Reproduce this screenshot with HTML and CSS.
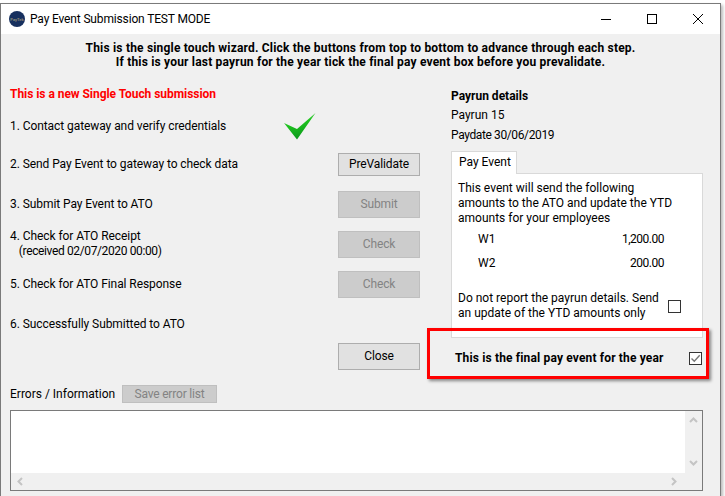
FILE: index.html
```html
<!DOCTYPE html>
<html lang="en">
<head>
<meta charset="utf-8">
<title>Pay Event Submission TEST MODE</title>
<link rel="stylesheet" href="styles.css">
</head>
<body>
<div class="window">
  <header class="titlebar">
    <svg class="app-icon" width="16" height="16" viewBox="0 0 16 16"><circle cx="8" cy="8" r="8" fill="#17305f"/><text x="8" y="9.500" text-anchor="middle" class="icon-text">PayTek</text></svg>
    <span class="title">Pay Event Submission TEST MODE</span>
    <div class="controls">
      <svg width="12" height="12" viewBox="0 0 12 12"><path d="M1 6.500H11" stroke="#000" fill="none"/></svg>
      <svg width="12" height="12" viewBox="0 0 12 12"><rect x="1.500" y="1.500" width="9" height="9" stroke="#000" fill="none"/></svg>
      <svg width="12" height="12" viewBox="0 0 12 12"><path d="M1 1L11 11M11 1L1 11" stroke="#000" fill="none"/></svg>
    </div>
  </header>
  <div class="client">
    <div class="intro">
      <div>This is the single touch wizard. Click the buttons from top to bottom to advance through each step.</div>
      <div>If this is your last payrun for the year tick the final pay event box before you prevalidate.</div>
    </div>
    <div class="main">
      <section class="steps">
        <div class="notice">This is a new Single Touch submission</div>
        <div class="step step-first">
          <span class="step-label">1. Contact gateway and verify credentials</span>
          <svg class="tick" width="32" height="28" viewBox="0 0 32 28"><defs><linearGradient id="tickfill" x1="0" y1="0" x2="0.3" y2="1"><stop offset="0" stop-color="#7bd87b"/><stop offset="0.45" stop-color="#1fc41f"/><stop offset="1" stop-color="#0c9a1c"/></linearGradient></defs><path d="M0 10L13 26.500L31.500 0L13 16Z" fill="url(#tickfill)"/></svg>
        </div>
        <div class="step"><span class="step-label">2. Send Pay Event to gateway to check data</span><button class="btn btn-short">PreValidate</button></div>
        <div class="step"><span class="step-label">3. Submit Pay Event to ATO</span><button class="btn btn-off">Submit</button></div>
        <div class="step"><span class="step-label">4. Check for ATO Receipt<br><span class="date-line">&nbsp;&nbsp;&nbsp;(received 02/07/2020 00:00)</span></span><button class="btn btn-off">Check</button></div>
        <div class="step"><span class="step-label">5. Check for ATO Final Response</span><button class="btn btn-off">Check</button></div>
        <div class="step"><span class="step-label">6. Successfully Submitted to ATO</span></div>
        <div class="close-row"><button class="btn">Close</button></div>
      </section>
      <aside class="details">
        <div class="details-head">Payrun details</div>
        <div class="details-line">Payrun 15</div>
        <div class="details-line details-date">Paydate 30/06/2019</div>
        <div class="tab">Pay Event</div>
        <div class="panel">
          <p class="panel-text">This event will send the following amounts to the ATO and update the YTD amounts for your employees</p>
          <div class="amount amount-first"><span>W1</span><span class="figure">1,200.00</span></div>
          <div class="amount"><span>W2</span><span class="figure">200.00</span></div>
          <div class="option"><span>Do not report the payrun details. Send an update of the YTD amounts only</span><i class="box"></i></div>
        </div>
        <div class="final">
          <span>This is the final pay event for the year</span>
          <i class="box box-checked"><svg width="11" height="11" viewBox="0 0 11 11"><path d="M1.500 5.500L4.300 8.300L9.700 2.300" fill="none" stroke="#777" stroke-width="1.400"/></svg></i>
        </div>
        <div class="highlight"></div>
      </aside>
    </div>
    <div class="errors-head"><span class="errors-label">Errors / Information</span><button class="btn-save">Save error list</button></div>
    <div class="listbox">
      <div class="list-top">
        <div class="list-body"></div>
        <div class="vscroll">
          <svg width="9" height="6" viewBox="0 0 9 6"><path d="M1 5L4.500 1.500L8 5" fill="none" stroke="#c4c4c4" stroke-width="2"/></svg>
          <svg width="9" height="6" viewBox="0 0 9 6"><path d="M1 1L4.500 4.500L8 1" fill="none" stroke="#c4c4c4" stroke-width="2"/></svg>
        </div>
      </div>
      <div class="hscroll">
        <svg width="6" height="9" viewBox="0 0 6 9"><path d="M5 1L1.500 4.500L5 8" fill="none" stroke="#c4c4c4" stroke-width="2"/></svg>
        <svg width="6" height="9" viewBox="0 0 6 9"><path d="M1 1L4.500 4.500L1 8" fill="none" stroke="#c4c4c4" stroke-width="2"/></svg>
      </div>
    </div>
  </div>
</div>
</body>
</html>
```
FILE: styles.css
```css
* { box-sizing: border-box; }
html, body { margin: 0; height: 100%; background: #fff; overflow: hidden; }
body { padding-top: 3px; font: 12px/15px Roboto, "Open Sans", sans-serif; color: #000; }
.window { width: 721px; height: 493px; border: 1px solid #7a7a7a; box-shadow: 2px 2px 3px #bbb; display: flex; flex-direction: column; }
.titlebar { height: 30px; flex: none; background: #fff; display: flex; align-items: center; padding-left: 8px; }
.app-icon { flex: none; }
.icon-text { font-size: 4px; font-weight: 700; fill: #8d8a78; }
.title { margin-left: 5px; letter-spacing: -0.15px; }
.controls { margin-left: auto; display: flex; }
.controls svg { margin-right: 34px; }
.controls svg:last-child { margin-right: 16px; }
.client { flex: 1; background: #f0f0f0; display: flex; flex-direction: column; padding: 7px 17px 5px 9px; }
.intro { font-weight: 700; text-align: center; margin-left: 8px; line-height: 14px; letter-spacing: 0.19px; }
.main { display: flex; height: 307px; margin-top: 9px; }
.steps { width: 410px; flex: none; }
.notice { color: #f00; font-weight: 700; height: 22px; margin-top: 9px; letter-spacing: -0.05px; }
.step { display: flex; align-items: center; justify-content: space-between; height: 40px; }
.step-label { letter-spacing: -0.07px; }
.date-line { letter-spacing: -0.37px; padding-left: 1px; }
.step-first { height: 35px; justify-content: flex-start; }
.tick { margin-left: 58px; }
.btn { width: 82px; height: 27px; font: inherit; padding: 0; background: #e1e1e1; border: 1px solid #adadad; color: #000; letter-spacing: -0.1px; }
.btn-short { height: 23px; }
.btn-off { background: #cccccc; border-color: #bfbfbf; color: #838383; }
.close-row { display: flex; justify-content: flex-end; margin-top: -1px; }
.details { flex: 1; position: relative; padding: 11px 0 0 31px; }
.details-head { font-weight: 700; }
.details-line { margin-top: 4px; }
.details-date { margin-top: 5px; letter-spacing: -0.38px; }
.tab { width: 66px; height: 23px; margin-top: 8px; background: #fff; border: 1px solid #d9d9d9; border-bottom: 0; padding: 3px 0 0 7px; position: relative; z-index: 1; }
.panel { width: 252px; height: 165px; margin-top: -1px; background: #fff; border: 1px solid #d9d9d9; padding: 7px 6px; }
.panel-text { margin: 0; width: 215px; }
.amount { display: flex; justify-content: space-between; padding: 0 32px 0 20px; margin-top: 9px; }
.amount-first { margin-top: 6px; }
.figure { letter-spacing: -0.5px; }
.option { display: flex; align-items: center; justify-content: space-between; margin-top: 20px; }
.option span { width: 206px; }
.box { display: block; flex: none; width: 13px; height: 13px; border: 1px solid #333; background: #fff; margin-right: 15px; }
.box-checked { margin-right: 0; display: flex; align-items: center; justify-content: center; }
.final { display: flex; align-items: center; justify-content: space-between; width: 247px; margin: 13px 0 0 4px; font-weight: 700; height: 14px; letter-spacing: 0.15px; }
.highlight { position: absolute; left: 7px; top: 250px; width: 282px; height: 51px; border: 3px solid #f00; box-shadow: 2px 2px 3px rgba(0,0,0,.45); }
.errors-head { display: flex; align-items: center; height: 18px; }
.errors-label { width: 112px; }
.btn-save { width: 95px; height: 18px; font: inherit; padding: 0; background: #cccccc; border: 1px solid #bfbfbf; color: #838383; letter-spacing: -0.2px; }
.listbox { width: 693px; height: 81px; margin-top: 7px; border: 1px solid #7a7a7a; background: #f0f0f0; display: flex; flex-direction: column; flex: none; }
.list-top { flex: 1; display: flex; }
.list-body { flex: 1; background: #fff; }
.vscroll { width: 17px; display: flex; flex-direction: column; justify-content: space-between; align-items: center; padding: 6px 0 7px; }
.hscroll { height: 17px; display: flex; justify-content: space-between; align-items: center; padding: 0 25px 0 6px; }
```
